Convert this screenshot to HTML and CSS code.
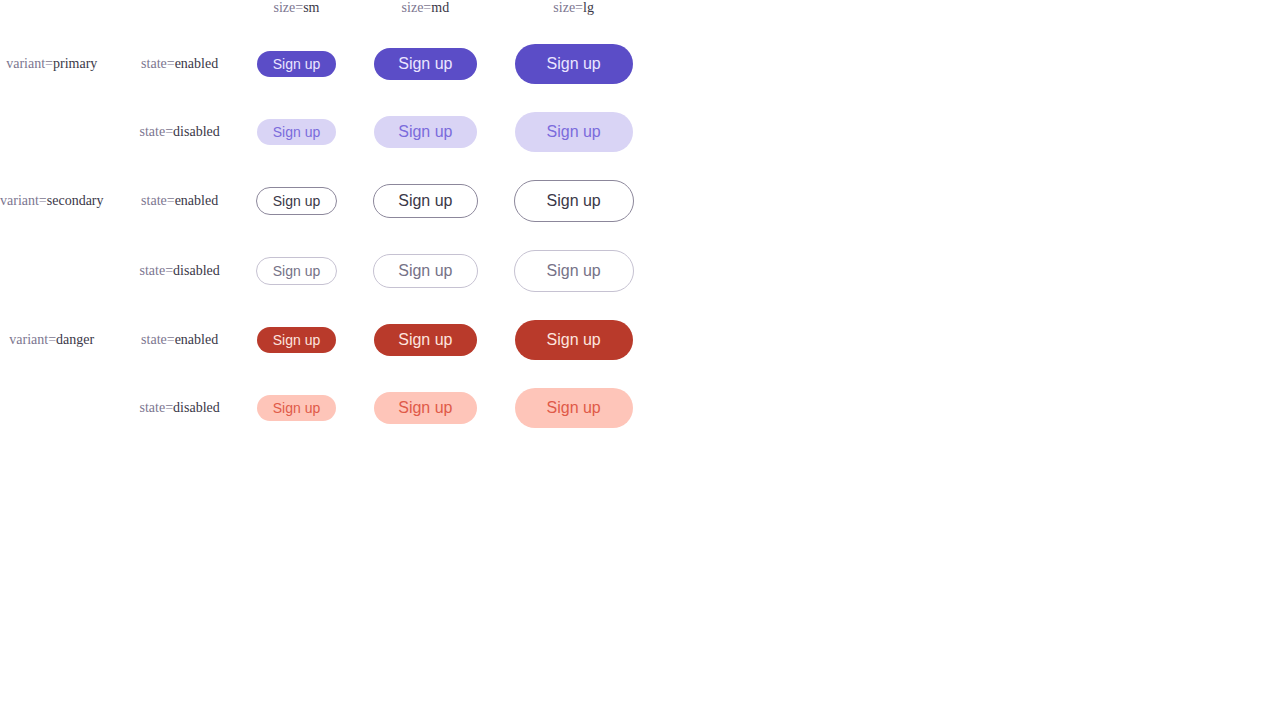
FILE: index.html
```html
<!DOCTYPE html>
<html lang="en">
<head>
<meta charset="utf-8">
<title>Button variants</title>
<link rel="stylesheet" href="styles.css">
</head>
<body>
<div class="sheet">
  <div class="cell"></div>
  <div class="cell"></div>
  <div class="cell label"><span class="k">size=</span><span class="v">sm</span></div>
  <div class="cell label"><span class="k">size=</span><span class="v">md</span></div>
  <div class="cell label"><span class="k">size=</span><span class="v">lg</span></div>

  <div class="cell label"><span class="k">variant=</span><span class="v">primary</span></div>
  <div class="cell label"><span class="k">state=</span><span class="v">enabled</span></div>
  <div class="cell"><button class="btn sm primary">Sign up</button></div>
  <div class="cell"><button class="btn md primary">Sign up</button></div>
  <div class="cell"><button class="btn lg primary">Sign up</button></div>

  <div class="cell"></div>
  <div class="cell label"><span class="k">state=</span><span class="v">disabled</span></div>
  <div class="cell"><button class="btn sm primary-dis">Sign up</button></div>
  <div class="cell"><button class="btn md primary-dis">Sign up</button></div>
  <div class="cell"><button class="btn lg primary-dis">Sign up</button></div>

  <div class="cell label"><span class="k">variant=</span><span class="v">secondary</span></div>
  <div class="cell label"><span class="k">state=</span><span class="v">enabled</span></div>
  <div class="cell"><button class="btn sm secondary">Sign up</button></div>
  <div class="cell"><button class="btn md secondary">Sign up</button></div>
  <div class="cell"><button class="btn lg secondary">Sign up</button></div>

  <div class="cell"></div>
  <div class="cell label"><span class="k">state=</span><span class="v">disabled</span></div>
  <div class="cell"><button class="btn sm secondary-dis">Sign up</button></div>
  <div class="cell"><button class="btn md secondary-dis">Sign up</button></div>
  <div class="cell"><button class="btn lg secondary-dis">Sign up</button></div>

  <div class="cell label"><span class="k">variant=</span><span class="v">danger</span></div>
  <div class="cell label"><span class="k">state=</span><span class="v">enabled</span></div>
  <div class="cell"><button class="btn sm danger">Sign up</button></div>
  <div class="cell"><button class="btn md danger">Sign up</button></div>
  <div class="cell"><button class="btn lg danger">Sign up</button></div>

  <div class="cell"></div>
  <div class="cell label"><span class="k">state=</span><span class="v">disabled</span></div>
  <div class="cell"><button class="btn sm danger-dis">Sign up</button></div>
  <div class="cell"><button class="btn md danger-dis">Sign up</button></div>
  <div class="cell"><button class="btn lg danger-dis">Sign up</button></div>
</div>
</body>
</html>
```

FILE: styles.css
```css
html, body {
  margin: 0;
  padding: 0;
  background: #ffffff;
}

.sheet {
  display: grid;
  width: max-content;
  grid-template-columns: repeat(5, auto);
  column-gap: 36px;
  row-gap: 28px;
  align-items: center;
  justify-items: center;
}

.cell {
  display: flex;
  align-items: center;
  justify-content: center;
}

.label {
  font-family: "Liberation Serif", "Times New Roman", serif;
  font-size: 14px;
  line-height: 16px;
  white-space: nowrap;
}

.k { color: #7c7690; }
.v { color: #3b3848; }

.btn {
  font-family: "Liberation Sans", Arial, sans-serif;
  border: none;
  border-radius: 999px;
  margin: 0;
  white-space: nowrap;
  cursor: pointer;
  box-sizing: content-box;
}

.btn.sm { font-size: 14px; line-height: 26px; height: 26px; padding: 0 16px; }
.btn.md { font-size: 16px; line-height: 32px; height: 32px; padding: 0 24px; }
.btn.lg { font-size: 16px; line-height: 40px; height: 40px; padding: 0 32px; }

.primary { background: #5b4dc7; color: #ebe6ff; }
.primary-dis { background: #d9d4f5; color: #7b6bdc; }

.secondary { background: #ffffff; color: #3b3848; border: 1px solid #8c879b; }
.secondary-dis { background: #ffffff; color: #767287; border: 1px solid #c6c2d2; }

.danger { background: #b93a2b; color: #fde4df; }
.danger-dis { background: #fec5b9; color: #e05a48; }
```
